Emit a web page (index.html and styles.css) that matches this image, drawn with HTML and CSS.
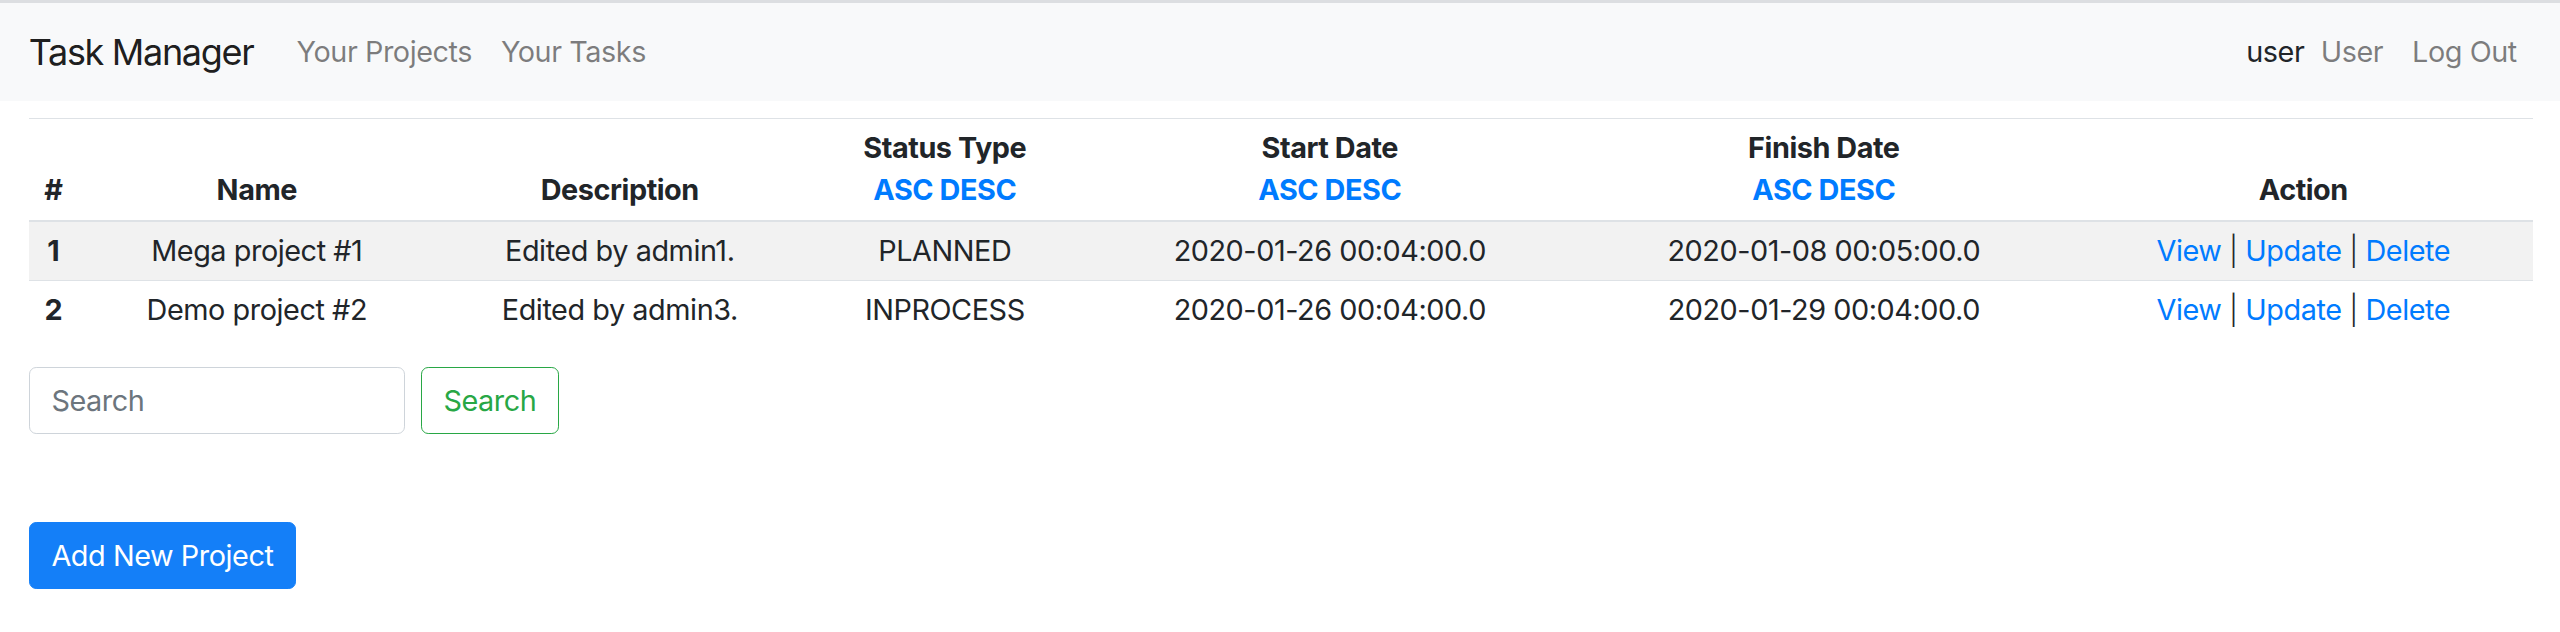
FILE: index.html
```html
<!DOCTYPE html>
<html lang="en">
<head>
<meta charset="utf-8">
<title>Task Manager</title>
<link rel="stylesheet" href="styles.css">
</head>
<body>
<nav class="navbar">
  <a class="brand" href="#">Task Manager</a>
  <ul class="nav">
    <li><a class="nav-link" href="#">Your Projects</a></li>
    <li><a class="nav-link" href="#">Your Tasks</a></li>
  </ul>
  <div class="nav-right">
    <span class="nav-user">user</span>
    <a class="nav-link" href="#">User</a>
    <a class="nav-link" href="#">Log Out</a>
  </div>
</nav>
<main class="container">
  <table class="table">
    <colgroup>
      <col class="c-num"><col class="c-name"><col class="c-desc"><col class="c-status"><col class="c-start"><col class="c-finish"><col class="c-action">
    </colgroup>
    <thead>
      <tr>
        <th>#</th>
        <th>Name</th>
        <th>Description</th>
        <th>Status Type<br><a href="#">ASC</a> <a href="#">DESC</a></th>
        <th>Start Date<br><a href="#">ASC</a> <a href="#">DESC</a></th>
        <th>Finish Date<br><a href="#">ASC</a> <a href="#">DESC</a></th>
        <th>Action</th>
      </tr>
    </thead>
    <tbody>
      <tr class="odd">
        <th>1</th>
        <td>Mega project #1</td>
        <td>Edited by admin1.</td>
        <td>PLANNED</td>
        <td>2020-01-26 00:04:00.0</td>
        <td>2020-01-08 00:05:00.0</td>
        <td><a href="#">View</a> <span class="sep">|</span> <a href="#">Update</a> <span class="sep">|</span> <a href="#">Delete</a></td>
      </tr>
      <tr>
        <th>2</th>
        <td>Demo project #2</td>
        <td>Edited by admin3.</td>
        <td>INPROCESS</td>
        <td>2020-01-26 00:04:00.0</td>
        <td>2020-01-29 00:04:00.0</td>
        <td><a href="#">View</a> <span class="sep">|</span> <a href="#">Update</a> <span class="sep">|</span> <a href="#">Delete</a></td>
      </tr>
    </tbody>
  </table>
  <form class="search-form">
    <input class="form-control" type="search" placeholder="Search">
    <button class="btn btn-outline-success" type="button">Search</button>
  </form>
  <a class="btn btn-primary" href="#">Add New Project</a>
</main>
</body>
</html>
```
FILE: styles.css
```css
* { box-sizing: border-box; }

html, body {
  margin: 0;
  background: #fff;
}

body {
  border-top: 3px solid #dcdee1;
  font-family: Inter, "Liberation Sans", sans-serif;
  font-size: 28.8px;
  line-height: 1.5;
  color: #212529;
  letter-spacing: -0.015em;
}

a { text-decoration: none; color: #007bff; }

.navbar {
  display: flex;
  align-items: center;
  background: #f8f9fa;
  padding: 13px 28.8px;
}

.brand {
  color: rgba(0, 0, 0, 0.9);
  font-size: 36px;
  line-height: 54px;
  padding: 9px 0;
  margin-right: 28.8px;
  letter-spacing: -0.037em;
}

.nav {
  display: flex;
  list-style: none;
  margin: 0;
  padding: 0;
}

.nav-link {
  display: block;
  color: rgba(0, 0, 0, 0.5);
  padding: 14.4px 14.4px;
}

.nav-right {
  margin-left: auto;
  display: flex;
  align-items: center;
}

.nav-user {
  color: #212529;
  margin-right: 2px;
}

.container {
  padding: 17px 28.8px 0;
}

.table {
  width: 100%;
  table-layout: fixed;
  border-collapse: collapse;
  margin-bottom: 27px;
  text-align: center;
}

.c-num { width: 49px; }
.c-name { width: 358px; }
.c-desc { width: 368px; }
.c-status { width: 282px; }
.c-start { width: 488px; }
.c-finish { width: 500px; }
.c-action { width: 459px; }

.table th,
.table td {
  padding: 8.2px;
  border-top: 1px solid #dee2e6;
  vertical-align: top;
  font-weight: 400;
}

.table th { font-weight: 700; }

.table thead th {
  vertical-align: bottom;
  border-bottom: 2px solid #dee2e6;
  line-height: 42.3px;
}

.table tbody th,
.table tbody td {
  padding-top: 7px;
}

.table tbody tr.odd { background: #f2f2f2; }

.sep { color: #212529; font-weight: 300; }

.search-form {
  display: flex;
  align-items: center;
  margin-bottom: 88px;
}

.form-control {
  width: 376px;
  height: 67px;
  padding: 10.8px 21.6px;
  font: inherit;
  letter-spacing: inherit;
  color: #495057;
  border: 1px solid #ced4da;
  border-radius: 7.2px;
  background: #fff;
  margin-right: 16px;
}

.form-control::placeholder { color: #6c757d; }

.btn {
  display: inline-block;
  font: inherit;
  letter-spacing: inherit;
  height: 67px;
  line-height: 43px;
  padding: 10.8px 21.6px;
  border: 1px solid transparent;
  border-radius: 7.2px;
  background: transparent;
}

.btn-outline-success {
  color: #28a745;
  border-color: #28a745;
  padding: 10px 21.6px;
}

.btn-primary {
  color: #fff;
  background: #147ff8;
  border-color: #147ff8;
}
```
